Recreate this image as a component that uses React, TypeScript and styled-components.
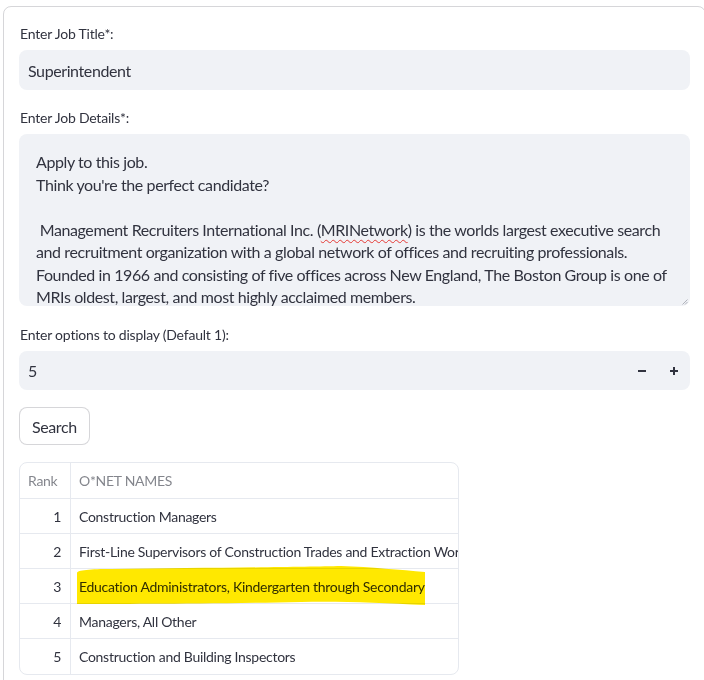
import React from "react";
import styled, { createGlobalStyle } from "styled-components";

const GlobalStyle = createGlobalStyle`
  html, body {
    margin: 0;
    padding: 0;
    background: #ffffff;
  }
  body {
    font-family: "Lato", "Noto Sans", sans-serif;
    letter-spacing: -0.025em;
    color: #31333f;
    overflow: hidden;
  }
`;

const Page = styled.div`
  padding: 6px 0 0 3px;
`;

const Panel = styled.div`
  box-sizing: border-box;
  width: 703px;
  height: 690px;
  border: 1px solid rgba(49, 51, 63, 0.2);
  border-radius: 8px;
  padding: 16px 15px 0 15px;
  display: flex;
  flex-direction: column;
`;

const Field = styled.div<{ $gap?: number }>`
  display: flex;
  flex-direction: column;
  gap: 5px;
  margin-bottom: ${({ $gap }) => ($gap ?? 17)}px;
`;

const Label = styled.label<{ $top?: number }>`
  font-size: 14px;
  line-height: 22px;
  letter-spacing: -0.015em;
  padding-left: 1px;
  margin-top: ${({ $top }) => $top ?? 0}px;
  color: #31333f;
`;

const InputBox = styled.div<{ $height?: number; $stepper?: boolean }>`
  box-sizing: border-box;
  height: ${({ $height }) => $height ?? 40}px;
  background: #f0f2f6;
  border-radius: 8px;
  display: flex;
  align-items: center;
  padding: ${({ $stepper }) => ($stepper ? "0 0 0 9px" : "0 9px")};
  font-size: 16px;
`;

const Grow = styled.span`
  flex: 1;
`;

const StepButton = styled.span`
  width: 32px;
  height: 100%;
  display: flex;
  justify-content: center;
  align-items: center;
`;

const TextArea = styled.div`
  position: relative;
  box-sizing: border-box;
  height: 172px;
  background: #f0f2f6;
  border-radius: 8px;
  padding: 17px 17px 0 17px;
  font-size: 16px;
  line-height: 22.5px;
  overflow: hidden;
`;

const Line = styled.div`
  white-space: pre;
  min-height: 22.5px;
`;

const Misspelled = styled.span`
  text-decoration: underline wavy #e53935;
  text-decoration-thickness: 1px;
  text-underline-offset: 3px;
`;

const Grip = styled.svg`
  position: absolute;
  right: 2px;
  bottom: 1px;
`;

const Button = styled.button`
  align-self: flex-start;
  box-sizing: border-box;
  height: 38px;
  padding: 0 12px;
  border: 1px solid rgba(49, 51, 63, 0.2);
  border-radius: 8px;
  background: #ffffff;
  color: #31333f;
  font-family: inherit;
  letter-spacing: inherit;
  font-size: 16px;
  margin-bottom: 17px;
`;

const TableWrap = styled.div`
  position: relative;
  width: 440px;
  box-sizing: border-box;
  border: 1px solid #e6e9ef;
  border-radius: 8px;
  overflow: hidden;
`;

const Table = styled.div`
  display: grid;
  grid-template-columns: 51px 1fr;
`;

const Cell = styled.div<{ $head?: boolean; $num?: boolean; $last?: boolean }>`
  box-sizing: border-box;
  height: ${({ $head }) => ($head ? 36 : 35)}px;
  display: flex;
  align-items: center;
  justify-content: ${({ $num }) => ($num ? "flex-end" : "flex-start")};
  padding: ${({ $num }) => ($num ? "0 9px 0 8px" : "0 0 0 8px")};
  font-size: 14px;
  letter-spacing: -0.02em;
  white-space: nowrap;
  overflow: hidden;
  color: ${({ $head }) => ($head ? "rgba(49, 51, 63, 0.6)" : "#31333f")};
  border-bottom: ${({ $last }) => ($last ? "none" : "1px solid #e6e9ef")};
  &:nth-child(odd) {
    border-right: 1px solid #e6e9ef;
  }
`;

const Highlight = styled.svg`
  position: absolute;
  left: 0;
  top: 0;
  pointer-events: none;
  mix-blend-mode: multiply;
`;

const rows = [
  "Construction Managers",
  "First-Line Supervisors of Construction Trades and Extraction Workers",
  "Education Administrators, Kindergarten through Secondary",
  "Managers, All Other",
  "Construction and Building Inspectors",
];

export default function App() {
  return (
    <Page>
      <GlobalStyle />
      <Panel>
        <Field>
          <Label>Enter Job Title*:</Label>
          <InputBox>Superintendent</InputBox>
        </Field>

        <Field>
          <Label>Enter Job Details*:</Label>
          <TextArea>
            <Line>Apply to this job.</Line>
            <Line>Think you're the perfect candidate?</Line>
            <Line> </Line>
            <Line>
              {" Management Recruiters International Inc. ("}
              <Misspelled>MRINetwork</Misspelled>
              {") is the worlds largest executive search"}
            </Line>
            <Line>
              and recruitment organization with a global network of offices and
              recruiting professionals.
            </Line>
            <Line>
              Founded in 1966 and consisting of five offices across New England,
              The Boston Group is one of
            </Line>
            <Line>MRIs oldest, largest, and most highly acclaimed members.</Line>
            <Grip width="6" height="6" viewBox="0 0 6 6">
              <path d="M5.5 0.5 L0.5 5.5 M5.5 3 L3 5.5" stroke="#b0b3bb" strokeWidth="1" />
            </Grip>
          </TextArea>
        </Field>

        <Field $gap={17}>
          <Label $top={1}>Enter options to display (Default 1):</Label>
          <InputBox $height={39} $stepper>
            <Grow>5</Grow>
            <StepButton>
              <svg width="10" height="10" viewBox="0 0 10 10">
                <path d="M1 5 H9" stroke="#31333f" strokeWidth="2" />
              </svg>
            </StepButton>
            <StepButton>
              <svg width="10" height="10" viewBox="0 0 10 10">
                <path d="M1 5 H9 M5 1 V9" stroke="#31333f" strokeWidth="2" />
              </svg>
            </StepButton>
          </InputBox>
        </Field>

        <Button>Search</Button>

        <TableWrap>
          <Table>
            <Cell $head>Rank</Cell>
            <Cell $head>O*NET NAMES</Cell>
            {rows.map((name, i) => (
              <React.Fragment key={name}>
                <Cell $num $last={i === rows.length - 1}>
                  {i + 1}
                </Cell>
                <Cell $last={i === rows.length - 1}>{name}</Cell>
              </React.Fragment>
            ))}
          </Table>
          <Highlight width="440" height="212" viewBox="0 0 440 212">
            <path
              d="M57,110 C57,107 71,106 91,106 C181,105 281,104 321,103 C351,104 381,107 405,109 L405,142 C361,140 321,138 281,139 C181,141 101,141 57,141 Z"
              fill="#ffe800"
            />
          </Highlight>
        </TableWrap>
      </Panel>
    </Page>
  );
}
